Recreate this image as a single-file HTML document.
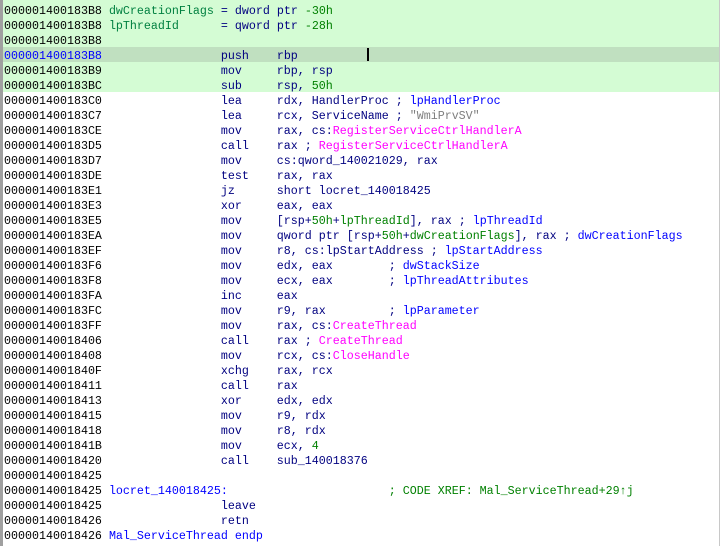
<!DOCTYPE html>
<html><head><meta charset="utf-8"><style>
html,body{margin:0;padding:0;background:#fff;width:722px;height:546px;overflow:hidden}
#wrap{position:relative;width:722px;height:546px}
.lb{position:absolute;left:0;top:0;width:3px;height:546px;background:#a0a0a0}
.rb{position:absolute;left:719px;top:0;width:1px;height:546px;background:#c8c8c8}
.g{position:absolute;left:3px;top:0;width:716px;height:92px;background:#d4fcd4}
.sel{position:absolute;left:3px;top:47px;width:716px;height:15px;background:#c0e0c0}
.cur{position:absolute;left:367px;top:48px;width:2px;height:13px;background:#000}
pre{position:absolute;left:4px;top:4px;margin:0;font-family:"Liberation Mono",monospace;font-size:11.67px;line-height:15px;color:#000;white-space:pre}
.m{color:#000080}.n{color:#008000}.c{color:#0000ff}.i{color:#ff00ff}.s{color:#808080}.l{color:#008040}.x{color:#008000}.b{color:#0000ff}
</style></head><body><div id="wrap">
<div class="lb"></div><div class="rb"></div><div class="g"></div><div class="sel"></div><div class="cur"></div>
<pre>000001400183B8 <span class="l">dwCreationFlags</span> <span class="m">= dword ptr </span><span class="n">-30h</span>
000001400183B8 <span class="l">lpThreadId</span>      <span class="m">= qword ptr </span><span class="n">-28h</span>
000001400183B8
<span class="b">000001400183B8</span>                 <span class="m">push    rbp</span>
000001400183B9                 <span class="m">mov     rbp, rsp</span>
000001400183BC                 <span class="m">sub     rsp, </span><span class="n">50h</span>
000001400183C0                 <span class="m">lea     rdx, HandlerProc ; </span><span class="c">lpHandlerProc</span>
000001400183C7                 <span class="m">lea     rcx, ServiceName ; </span><span class="s">"WmiPrvSV"</span>
000001400183CE                 <span class="m">mov     rax, cs:</span><span class="i">RegisterServiceCtrlHandlerA</span>
000001400183D5                 <span class="m">call    rax ; </span><span class="i">RegisterServiceCtrlHandlerA</span>
000001400183D7                 <span class="m">mov     cs:qword_140021029, rax</span>
000001400183DE                 <span class="m">test    rax, rax</span>
000001400183E1                 <span class="m">jz      short locret_140018425</span>
000001400183E3                 <span class="m">xor     eax, eax</span>
000001400183E5                 <span class="m">mov     [rsp+</span><span class="n">50h</span><span class="m">+</span><span class="n">lpThreadId</span><span class="m">], rax ; </span><span class="c">lpThreadId</span>
000001400183EA                 <span class="m">mov     qword ptr [rsp+</span><span class="n">50h</span><span class="m">+</span><span class="n">dwCreationFlags</span><span class="m">], rax ; </span><span class="c">dwCreationFlags</span>
000001400183EF                 <span class="m">mov     r8, cs:lpStartAddress ; </span><span class="c">lpStartAddress</span>
000001400183F6                 <span class="m">mov     edx, eax        ; </span><span class="c">dwStackSize</span>
000001400183F8                 <span class="m">mov     ecx, eax        ; </span><span class="c">lpThreadAttributes</span>
000001400183FA                 <span class="m">inc     eax</span>
000001400183FC                 <span class="m">mov     r9, rax         ; </span><span class="c">lpParameter</span>
000001400183FF                 <span class="m">mov     rax, cs:</span><span class="i">CreateThread</span>
00000140018406                 <span class="m">call    rax ; </span><span class="i">CreateThread</span>
00000140018408                 <span class="m">mov     rcx, cs:</span><span class="i">CloseHandle</span>
0000014001840F                 <span class="m">xchg    rax, rcx</span>
00000140018411                 <span class="m">call    rax</span>
00000140018413                 <span class="m">xor     edx, edx</span>
00000140018415                 <span class="m">mov     r9, rdx</span>
00000140018418                 <span class="m">mov     r8, rdx</span>
0000014001841B                 <span class="m">mov     ecx, </span><span class="n">4</span>
00000140018420                 <span class="m">call    sub_140018376</span>
00000140018425
00000140018425 <span class="b">locret_140018425:</span>                       <span class="x">; CODE XREF: Mal_ServiceThread+29↑j</span>
00000140018425                 <span class="m">leave</span>
00000140018426                 <span class="m">retn</span>
00000140018426 <span class="b">Mal_ServiceThread endp</span></pre>
</div></body></html>
